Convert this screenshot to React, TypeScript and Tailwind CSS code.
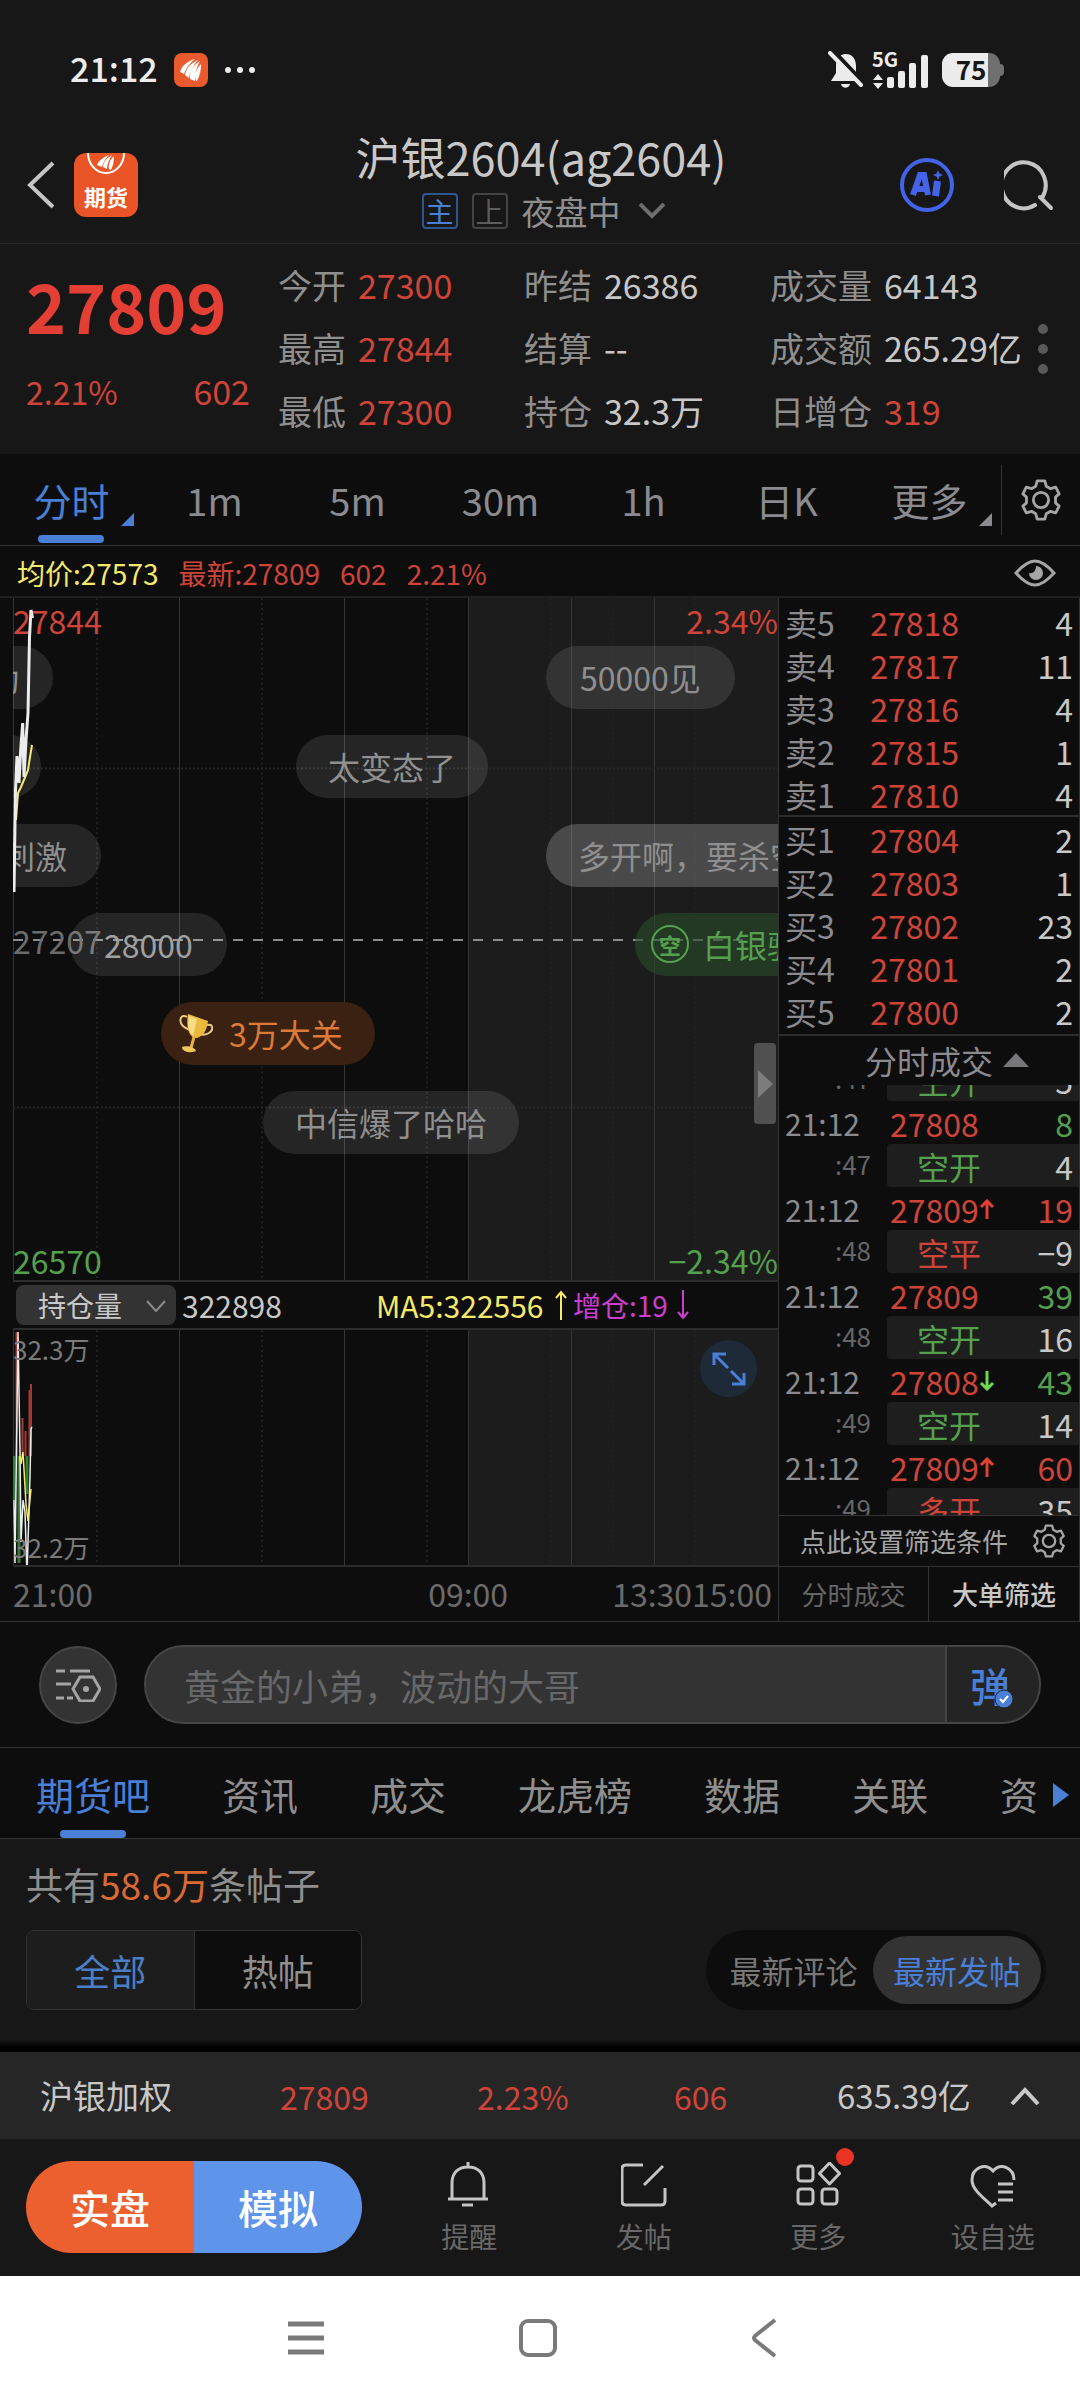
import React, { useState } from "react";

type Level = { label: string; price: string; volume: string };

type Trade = {
  time?: string;
  price?: string;
  trend?: "up" | "down";
  volume?: string;
  volumeUp?: boolean;
  second: string;
  kind: string;
  kindUp?: boolean;
  change: string;
};

const stats = [
  [
    { label: "今开", value: "27300", up: true },
    { label: "最高", value: "27844", up: true },
    { label: "最低", value: "27300", up: true },
  ],
  [
    { label: "昨结", value: "26386", up: false },
    { label: "结算", value: "--", up: false },
    { label: "持仓", value: "32.3万", up: false },
  ],
  [
    { label: "成交量", value: "64143", up: false },
    { label: "成交额", value: "265.29亿", up: false },
    { label: "日增仓", value: "319", up: true },
  ],
];

const periods = ["分时", "1m", "5m", "30m", "1h", "日K", "更多"];

const asks: Level[] = [
  { label: "卖5", price: "27818", volume: "4" },
  { label: "卖4", price: "27817", volume: "11" },
  { label: "卖3", price: "27816", volume: "4" },
  { label: "卖2", price: "27815", volume: "1" },
  { label: "卖1", price: "27810", volume: "4" },
];

const bids: Level[] = [
  { label: "买1", price: "27804", volume: "2" },
  { label: "买2", price: "27803", volume: "1" },
  { label: "买3", price: "27802", volume: "23" },
  { label: "买4", price: "27801", volume: "2" },
  { label: "买5", price: "27800", volume: "2" },
];

const trades: Trade[] = [
  { second: ":47", kind: "空开", change: "5" },
  { time: "21:12", price: "27808", volume: "8", second: ":47", kind: "空开", change: "4" },
  { time: "21:12", price: "27809", trend: "up", volume: "19", volumeUp: true, second: ":48", kind: "空平", kindUp: true, change: "−9" },
  { time: "21:12", price: "27809", volume: "39", second: ":48", kind: "空开", change: "16" },
  { time: "21:12", price: "27808", trend: "down", volume: "43", second: ":49", kind: "空开", change: "14" },
  { time: "21:12", price: "27809", trend: "up", volume: "60", volumeUp: true, second: ":49", kind: "多开", kindUp: true, change: "35" },
];

const forumTabs = ["期货吧", "资讯", "成交", "龙虎榜", "数据", "关联", "资"];

function GearIcon({ className }: { className?: string }) {
  return (
    <svg viewBox="0 0 40 44" className={className} fill="none" stroke="currentColor" strokeWidth="3" strokeLinejoin="round">
      <path d="M16 2h8l1.500 5.500 4.500 2.600 5.400-1.500 3.600 7-3.800 3.400v6l3.800 3.400-3.600 7-5.400-1.500-4.500 2.600L24 42h-8l-1.500-5.500-4.500-2.600-5.400 1.500-3.600-7L4.800 25v-6L1 15.600l3.600-7 5.400 1.500 4.500-2.600z" />
      <circle cx="20" cy="22" r="8" />
    </svg>
  );
}

function StatusBar() {
  return (
    <div className="flex h-[112px] items-center justify-between bg-[#171717] pt-7 pr-[76px] pl-[70px]">
      <div className="flex items-center gap-4">
        <span className="pb-1 text-[34px] leading-none font-medium text-[#ececec]">21:12</span>
        <svg viewBox="0 0 34 34" className="h-[34px] w-[34px]">
          <rect width="34" height="34" rx="8" fill="#ea5a2c" />
          <path d="M6 19c2-7 8-11 15-13-5 4-9 9-11 15zM11 22c1-7 6-12 13-15-5 6-8 11-9 18zM16 26c-1-7 3-14 10-18-3 6-5 11-5 20zM22 28c-2-6 0-12 5-17 0 6-1 12-4 17z" fill="#fff" />
        </svg>
        <svg viewBox="0 0 32 8" className="h-2 w-8" fill="#ececec">
          <circle cx="4" cy="4" r="3" />
          <circle cx="16" cy="4" r="3" />
          <circle cx="28" cy="4" r="3" />
        </svg>
      </div>
      <div className="flex items-center gap-2 text-[#ececec]">
        <svg viewBox="0 0 36 38" className="h-[38px] w-9">
          <path d="M18 3c7 0 10 6 10 12v7l5 8H3l5-8v-7C8 9 11 3 18 3zM13 33h9c-1 5-8 5-9 0z" fill="currentColor" />
          <path d="M6 1l30 32" stroke="#171717" strokeWidth="5" />
          <path d="M2 2l31 32" stroke="currentColor" strokeWidth="4" strokeLinecap="round" />
        </svg>
        <div className="relative h-[38px] w-[58px]">
          <span className="absolute -top-[2px] left-0 text-[20px] leading-none font-bold">5G</span>
          <svg viewBox="0 0 58 38" className="h-full w-full" fill="currentColor">
            <path d="M1 29l5-6 5 6zM1 32l5 6 5-6z" />
            <rect x="15" y="26" width="7" height="11" rx="2" />
            <rect x="26" y="20" width="7" height="17" rx="2" />
            <rect x="37" y="12" width="7" height="25" rx="2" />
            <rect x="49" y="4" width="7" height="33" rx="2" />
          </svg>
        </div>
        <div className="ml-1 flex items-center">
          <div className="flex h-[34px] w-[58px] items-center justify-center rounded-[11px] bg-linear-to-r from-[#ececec] from-80% to-[#6f6f6f] to-80% pb-[2px] text-[26px] leading-none font-bold text-[#171717]">
            75
          </div>
          <div className="h-3 w-1 rounded-r bg-[#6f6f6f]" />
        </div>
      </div>
    </div>
  );
}

function Header() {
  return (
    <header className="flex h-[132px] items-center justify-between border-b border-[#2a2a2a] bg-[#171717] px-[26px]">
      <div className="flex w-[160px] items-center gap-[18px] pt-[14px]">
        <button aria-label="返回">
          <svg viewBox="0 0 30 48" className="h-12 w-[30px]" fill="none" stroke="#c4c4c4" strokeWidth="4">
            <path d="M27 2L4 24l23 22" />
          </svg>
        </button>
        <button className="flex h-16 w-16 flex-col items-center justify-between overflow-hidden rounded-xl bg-[#ea5527] pb-[10px]">
          <svg viewBox="0 0 40 24" className="h-6 w-10">
            <path d="M2 0a18 20 0 0 0 36 0" fill="none" stroke="#fff" strokeWidth="2" />
            <path d="M11 12c2-5 7-8 12-10-4 4-6 8-7 12zM17 14c0-5 4-9 9-12-3 5-5 9-5 14zM23 16c-1-5 1-9 5-13 0 5-1 10-3 14z" fill="#fff" />
          </svg>
          <span className="text-[22px] leading-none font-bold text-white">期货</span>
        </button>
      </div>
      <div className="flex flex-col items-center gap-[10px] pt-1 pl-[2px]">
        <h1 className="text-[45px] leading-[52px] text-[#c8c8c8]">沪银2604(ag2604)</h1>
        <div className="flex items-center gap-[14px] pl-1">
          <span className="flex h-9 w-9 items-center justify-center rounded border-2 border-[#2c5591] text-[28px] leading-none text-[#4a7fd6]">主</span>
          <span className="flex h-9 w-9 items-center justify-center rounded border-2 border-[#444] text-[28px] leading-none text-[#5c5c5c]">上</span>
          <button className="flex items-center gap-[18px] text-[33px] leading-9 text-[#8f8f8f]">
            夜盘中
            <svg viewBox="0 0 26 16" className="h-4 w-[26px]" fill="none" stroke="#6e6e6e" strokeWidth="4">
              <path d="M1 1l12 12L25 1" />
            </svg>
          </button>
        </div>
      </div>
      <div className="flex w-[160px] items-center justify-end gap-[50px] pt-[14px]">
        <button aria-label="Ai">
          <svg viewBox="0 0 54 54" className="h-[54px] w-[54px]" fill="none" stroke="#4363e8">
            <circle cx="27" cy="27" r="25" strokeWidth="4" />
            <path d="M13 37l7-20h4l4 20M16 31h11" strokeWidth="6" />
            <path d="M37.500 23l-2 15" strokeWidth="7" />
            <path d="M38 12l1.500 3.500 3.500 1.500-3.500 1.500-1.500 3.500-1.500-3.500-3.500-1.500 3.500-1.500z" fill="#4363e8" stroke="none" />
          </svg>
        </button>
        <button aria-label="搜索">
          <svg viewBox="0 0 50 52" className="h-[52px] w-[50px]" fill="none" stroke="#c4c4c4" strokeWidth="4" strokeLinecap="round">
            <path d="M31 46A22 23 0 1 1 38 39" />
            <path d="M36 38l11 11" />
          </svg>
        </button>
      </div>
    </header>
  );
}

function Quote() {
  return (
    <section className="flex h-[210px] bg-[#171717] pt-[9px] pl-[26px]">
      <div className="flex w-[252px] flex-col text-[#cf4439]">
        <div className="text-[68px] leading-[104px] font-bold text-[#e33f34]">27809</div>
        <div className="flex items-center justify-between pr-7 leading-[68px]">
          <span className="text-[32px]">2.21%</span>
          <span className="text-[34px]">602</span>
        </div>
      </div>
      <div className="flex flex-1 text-[34px] leading-[63px]">
        {stats.map((col, i) => (
          <dl key={i} className="w-[246px] whitespace-nowrap">
            {col.map((s) => (
              <div key={s.label} className="flex gap-3">
                <dt className="text-[#8f8f8f]">{s.label}</dt>
                <dd className={s.up ? "text-[#cf4439]" : "text-[#c8c8c8]"}>{s.value}</dd>
              </div>
            ))}
          </dl>
        ))}
      </div>
      <button aria-label="更多行情" className="flex w-[42px] flex-col gap-[10px] pt-[71px]">
        <span className="h-[10px] w-[10px] rounded-full bg-[#595959]" />
        <span className="h-[10px] w-[10px] rounded-full bg-[#595959]" />
        <span className="h-[10px] w-[10px] rounded-full bg-[#595959]" />
      </button>
    </section>
  );
}

function PeriodTabs() {
  const [active, setActive] = useState("分时");
  return (
    <nav className="flex h-[92px] items-center border-b border-[#333]">
      <div className="grid h-full flex-1 grid-cols-7">
        {periods.map((p) => (
          <button
            key={p}
            onClick={() => setActive(p)}
            className={`relative flex items-center justify-center text-[38px] leading-none ${p === active ? "text-[#4a7fd6]" : "text-[#8a8a8f]"}`}
          >
            {p}
            {(p === "分时" || p === "更多") && (
              <svg viewBox="0 0 13 13" className="absolute right-[9px] bottom-[19px] h-[13px] w-[13px]">
                <path d="M13 0v13H0z" fill="currentColor" />
              </svg>
            )}
            {p === active && <span className="absolute bottom-[2px] left-[38px] h-2 w-[66px] rounded bg-[#4a7fd6]" />}
          </button>
        ))}
      </div>
      <button aria-label="设置" className="flex h-[70px] w-[79px] items-center justify-center border-l border-[#333] text-[#a5a5a5]">
        <GearIcon className="h-[42px] w-10" />
      </button>
    </nav>
  );
}

function PriceLine() {
  return (
    <div className="flex h-[52px] items-center justify-between border-b-2 border-[#202020] pr-6 pl-[17px] pt-1">
      <div className="flex gap-5 text-[28px] leading-none text-[#cf4439]">
        <span className="text-[#f5ea6b]">均价:27573</span>
        <span>最新:27809</span>
        <span>602</span>
        <span>2.21%</span>
      </div>
      <button aria-label="显示">
        <svg viewBox="0 0 42 28" className="h-7 w-[42px]" fill="none" stroke="#a5a5a5" strokeWidth="3">
          <path d="M2 14C10 5 15 2 21 2s11 3 19 12c-8 9-13 12-19 12S10 23 2 14z" />
          <path d="M22 7a7 7 0 1 1-7 7c4 1 7-2 7-7z" fill="#a5a5a5" stroke="none" />
        </svg>
      </button>
    </div>
  );
}

const solidLines = [0.5, 166.5, 331.5, 455.5, 558.5, 641.5];
const dottedLines = [84, 249, 414, 538, 600, 682];

function Grid({ height }: { height: number }) {
  return (
    <>
      <rect x="456" y="0" width="310" height={height} fill="#1c1c1c" />
      {solidLines.map((x) => (
        <path key={x} d={`M${x} 0V${height}`} stroke="#353535" />
      ))}
      {dottedLines.map((x) => (
        <path key={x} d={`M${x} 0V${height}`} stroke="#202020" strokeWidth="2" strokeDasharray="2 3" />
      ))}
    </>
  );
}

function MinuteChart() {
  const pill = "absolute flex h-[63px] items-center rounded-full pb-[2px] text-[32px] leading-none whitespace-nowrap";
  return (
    <div className="relative h-[684px] overflow-hidden border-b-2 border-[#2c2c2c]">
      <svg viewBox="0 0 765 684" preserveAspectRatio="none" className="h-full w-full" fill="none">
        <Grid height={684} />
        <path d="M0 171H765M0 511H765" stroke="#262626" strokeWidth="2" strokeDasharray="2 2" />
        <path d="M0 343H765" stroke="#8c8c8c" strokeWidth="2" strokeDasharray="10 10" />
      </svg>
      <span className="absolute top-[6px] left-0 text-[32px] leading-8 text-[#cf4439]">27844</span>
      <span className="absolute top-[6px] right-0 text-[32px] leading-8 text-[#cf4439]">2.34%</span>
      <span className="absolute top-[326px] left-0 text-[32px] leading-8 text-[#6b6b6b]">27207</span>
      <span className="absolute bottom-[4px] left-0 text-[32px] leading-8 text-[#55a04f]">26570</span>
      <span className="absolute right-0 bottom-[4px] text-[32px] leading-8 text-[#55a04f]">−2.34%</span>

      {/* scrolling comments */}
      <div className={`${pill} top-[48px] right-[725px] bg-white/10 px-[34px] text-[#8f8f8f]`}>动</div>
      <div className={`${pill} top-[48px] left-[533px] bg-white/10 px-[34px] text-[#8f8f8f]`}>50000见</div>
      <div className={`${pill} top-[137px] right-[737px] w-24 bg-white/10`} />
      <div className={`${pill} top-[137px] left-[283px] bg-white/10 px-8 text-[#8f8f8f]`}>太变态了</div>
      <div className={`${pill} top-[226px] right-[677px] bg-white/10 px-[34px] text-[#8f8f8f]`}>刺激</div>
      <div className={`${pill} top-[226px] left-[533px] bg-white/20 px-8 text-[#8f8f8f]`}>多开啊，要杀空头</div>
      <div className={`${pill} top-[315px] left-[57px] bg-white/10 px-[34px] text-[#a0a0a0]`}>28000</div>
      <div className={`${pill} top-[315px] left-[622px] gap-[14px] bg-[#2a4d2a]/60 px-4 text-[#55a04f]`}>
        <span className="flex h-[38px] w-[38px] items-center justify-center rounded-full border-2 border-[#55a04f] text-[22px] font-bold">空</span>
        白银骑士
      </div>
      <div className={`${pill} top-[404px] left-[148px] gap-4 bg-[#3a2111] pr-8 pl-[18px] text-[#dd7a38]`}>
        <svg viewBox="0 0 34 40" className="h-10 w-[34px]">
          <path d="M8 4C2 0-1 8 4 13c2 2 4 3 7 4M28 12c6-2 7 5 2 8-3 2-6 2-9 1" fill="none" stroke="#e8c988" strokeWidth="2" />
          <path d="M9 1l20 7c-1 9-5 17-13 17C9 23 7 12 9 1z" fill="#eab93e" />
          <path d="M10 3l8 3-4 17C9 19 8 11 10 3z" fill="#f8dd86" />
          <path d="M15 24l-3 11" stroke="#e6b13c" strokeWidth="3" />
          <path d="M3 34c4-2 13 0 14 4-3 2-14 2-14-4z" fill="#f0c75a" />
        </svg>
        3万大关
      </div>
      <div className={`${pill} top-[493px] left-[250px] bg-white/10 px-8 text-[#8f8f8f]`}>中信爆了哈哈</div>

      <svg viewBox="0 0 24 326" className="absolute top-0 left-0 h-[326px] w-6" fill="none">
        <path d="M3 222L5 195 8 189 13 177 15 172 17 159 19 147" stroke="#f5ea6b" strokeWidth="2" />
        <path d="M1 294L2.500 192 4 158 6 185 7.700 152 9.700 125 11 179 13 142 15 115 16.500 39 18 12 19.500 20" stroke="#ececec" strokeWidth="3" />
      </svg>
      <button aria-label="收起盘口" className="absolute top-[445px] right-[2px] flex h-[81px] w-[22px] items-center justify-center rounded-sm bg-[#505050]">
        <svg viewBox="0 0 15 28" className="h-7 w-[15px]">
          <path d="M0 0l15 14L0 28z" fill="#7c7c7c" />
        </svg>
      </button>
    </div>
  );
}

function PositionChart() {
  return (
    <>
      <div className="flex h-[46px] items-center text-[30px] leading-none">
        <div className="relative ml-[3px] h-10 w-40">
          <select aria-label="指标" className="h-full w-full appearance-none rounded-lg bg-[#333] pl-[22px] text-[28px] leading-none text-[#c8c8c8]">
            <option>持仓量</option>
            <option>成交量</option>
          </select>
          <svg viewBox="0 0 20 12" className="pointer-events-none absolute top-[15px] right-[10px] h-3 w-5" fill="none" stroke="#8a8a8a" strokeWidth="2">
            <path d="M1 1l9 10 9-10" />
          </svg>
        </div>
        <span className="w-[200px] pl-[6px] text-[#c8c8c8]">322898</span>
        <span className="flex w-[191px] items-center justify-between text-[#f5ea6b]">
          MA5:322556
          <svg viewBox="0 0 12 30" className="h-[30px] w-3" fill="none" stroke="currentColor" strokeWidth="2">
            <path d="M6 30V2M1 8l5-6 5 6" />
          </svg>
        </span>
        <span className="ml-[6px] flex w-[116px] items-center justify-between text-[28px] text-[#cb3fd0]">
          增仓:19
          <svg viewBox="0 0 12 30" className="h-[30px] w-3" fill="none" stroke="currentColor" strokeWidth="2">
            <path d="M6 0v28M1 22l5 6 5-6" />
          </svg>
        </span>
      </div>
      <div className="relative h-[239px] border-y-2 border-[#2c2c2c]">
        <svg viewBox="0 0 765 235" preserveAspectRatio="none" className="h-full w-full" fill="none">
          <Grid height={235} />
        </svg>
        <svg viewBox="0 0 22 235" className="absolute top-0 left-0 h-[235px] w-[22px]" fill="none">
          <path d="M3.500 2v124M9.500 88v38M12.500 101v25M16.500 60v66M18 54v72" stroke="#a33a33" strokeWidth="2" />
          <path d="M1 126v44M6 126v107M14 126v38" stroke="#357a35" strokeWidth="3" />
          <path d="M1 170l1 63 3-231 2 120 1 90 2-42 2 12 2 63 3-98 1-48 1-2" stroke="#ececec" strokeWidth="1.500" />
          <path d="M7 126l1 8 2-12 3 52 2 17 3-32" stroke="#f5ea6b" strokeWidth="1.500" />
        </svg>
        <span className="absolute top-[3px] left-0 text-[26px] leading-8 text-[#7a7a7a]">32.3万</span>
        <span className="absolute bottom-[2px] left-0 text-[26px] leading-8 text-[#7a7a7a]">32.2万</span>
        <button aria-label="全屏" className="absolute top-[10px] right-[21px] flex h-[57px] w-[57px] items-center justify-center rounded-full bg-[#1f2a38]">
          <svg viewBox="0 0 34 34" className="h-[34px] w-[34px]" fill="none" stroke="#4a7fd6" strokeWidth="3">
            <path d="M2 13V2h12M2 2l14 14M32 21v11H20M32 32L19 19" />
          </svg>
        </button>
      </div>
      <div className="flex h-[54px] items-center pb-[2px] text-[32px] leading-none text-[#6b6b6b]">
        <span className="flex-1">21:00</span>
        <span className="w-[184px]">09:00</span>
        <span className="pr-[6px]">13:3015:00</span>
      </div>
    </>
  );
}

function OrderTable({ levels }: { levels: Level[] }) {
  return (
    <table className="w-full table-fixed text-[32px] leading-none">
      <tbody>
        {levels.map((l) => (
          <tr key={l.label} className="h-[43px]">
            <th scope="row" className="w-[76px] pl-[6px] text-left font-normal text-[#8a8a8f]">{l.label}</th>
            <td className="w-[104px] text-right text-[#cf4439]">{l.price}</td>
            <td className="pr-[6px] text-right text-[#c8c8c8]">{l.volume}</td>
          </tr>
        ))}
      </tbody>
    </table>
  );
}

function TradeTable() {
  return (
    <table className="-mt-[27px] w-full table-fixed text-[32px] leading-none">
      <tbody>
        {trades.map((t, i) => (
          <React.Fragment key={i}>
            {t.time && (
              <tr className="h-[43px]">
                <td className="w-[108px] pl-[6px] text-[30px] text-[#8a8a8f]">{t.time}</td>
                <td className="w-[116px] pl-[3px] text-[#cf4439]">
                  <span className="flex items-center">
                    {t.price}
                    {t.trend && (
                      <svg viewBox="0 0 16 20" className={`h-5 w-4 shrink-0 ${t.trend === "up" ? "text-[#e33f34]" : "rotate-180 text-[#6cd94f]"}`} fill="none" stroke="currentColor" strokeWidth="3">
                        <path d="M8 20V2M2 8l6-6 6 6" />
                      </svg>
                    )}
                  </span>
                </td>
                <td className={`pr-[6px] text-right ${t.volumeUp ? "text-[#cf4439]" : "text-[#55a04f]"}`}>{t.volume}</td>
              </tr>
            )}
            <tr className="h-[43px]">
              <td className="w-[108px] pr-4 pb-1 text-right text-[26px] text-[#666]">{t.second}</td>
              <td className={`w-[116px] rounded-l bg-[#1e1e1e] pl-[30px] ${t.kindUp ? "text-[#cf4439]" : "text-[#55a04f]"}`}>{t.kind}</td>
              <td className="bg-[#1e1e1e] pr-[6px] text-right text-[#c8c8c8]">{t.change}</td>
            </tr>
          </React.Fragment>
        ))}
      </tbody>
    </table>
  );
}

function SidePanel() {
  return (
    <aside className="flex w-[302px] flex-col border-x border-[#333]">
      <div className="h-[219px] border-b-2 border-[#2c2c2c] pt-[2px]">
        <OrderTable levels={asks} />
      </div>
      <div className="h-[219px] border-b-2 border-[#2c2c2c]">
        <OrderTable levels={bids} />
      </div>
      <button className="flex h-[49px] items-center justify-center gap-[10px] pb-[2px] pl-9 text-[32px] leading-none text-[#8a8a8f]">
        分时成交
        <svg viewBox="0 0 26 14" className="h-[14px] w-[26px]">
          <path d="M13 0l13 14H0z" fill="#77777a" />
        </svg>
      </button>
      <div className="h-[430px] overflow-hidden">
        <TradeTable />
      </div>
      <button className="flex h-[51px] items-center justify-between border-t border-[#333] pr-[14px] pl-[21px] text-[26px] leading-none text-[#a5a5a5]">
        点此设置筛选条件
        <GearIcon className="h-[34px] w-8" />
      </button>
      <div className="grid flex-1 grid-cols-2 border-t border-[#333] text-[26px] leading-none">
        <button className="border-r border-[#333] text-[#666]">分时成交</button>
        <button className="font-medium text-[#c8c8c8]">大单筛选</button>
      </div>
    </aside>
  );
}

function CommentBar() {
  return (
    <div className="flex h-[127px] items-center gap-[27px] border-y border-[#333] px-[39px]">
      <button aria-label="弹幕设置" className="flex h-[78px] w-[78px] items-center justify-center rounded-full border-2 border-[#454545] bg-[#333]">
        <svg viewBox="0 0 46 34" className="h-[34px] w-[46px]" fill="none" stroke="#a5a5a5" strokeWidth="3">
          <path d="M1 3h9M15 3h20M1 16h15M1 30h8M12 30h6" />
          <path d="M25 9h13l7 12-7 12H25l-7-12z" />
          <circle cx="31" cy="21" r="3" fill="#a5a5a5" stroke="none" />
        </svg>
      </button>
      <div className="flex h-[79px] flex-1 overflow-hidden rounded-full border-2 border-[#454545] bg-[#333]">
        <input aria-label="发弹幕" placeholder="黄金的小弟，波动的大哥" className="min-w-0 flex-1 bg-transparent pl-[38px] text-[36px] text-[#c8c8c8] placeholder-[#686868] outline-none" />
        <button className="flex w-[94px] items-center border-l-2 border-[#454545] bg-[#242424] pl-[23px] text-[40px] leading-none font-medium text-[#4a7fd6]">
          <span className="relative">
            弹
            <svg viewBox="0 0 20 20" className="absolute -right-1 -bottom-1 h-5 w-5">
              <circle cx="10" cy="10" r="9" fill="#4a7fd6" stroke="#242424" />
              <path d="M6 10l3 3 5-6" fill="none" stroke="#fff" strokeWidth="2" />
            </svg>
          </span>
        </button>
      </div>
    </div>
  );
}

function Forum() {
  return (
    <>
      <nav className="flex h-[91px] items-center border-b border-[#333] pl-9">
        <div className="flex h-full min-w-0 flex-1 gap-[72px]">
          {forumTabs.map((t, i) => (
            <button key={t + i} className={`relative flex shrink-0 items-center pt-[2px] text-[38px] leading-none whitespace-nowrap ${i === 0 ? "text-[#4a7fd6]" : "text-[#8f8f8f]"}`}>
              {t}
              {i === 0 && <span className="absolute bottom-0 left-6 h-2 w-[66px] rounded bg-[#4a7fd6]" />}
            </button>
          ))}
        </div>
        <svg viewBox="0 0 16 24" className="mt-1 mr-[11px] h-6 w-4">
          <path d="M0 0l16 12L0 24z" fill="#4a7fd6" />
        </svg>
      </nav>
      <section className="h-[213px] bg-[#171717] pt-[25px] text-[36px]">
        <p className="pl-[26px] text-[37px] leading-[40px] text-[#8f8f8f]">
          共有<span className="text-[#d96a33]">58.6万</span>条帖子
        </p>
        <div className="mt-[26px] flex items-center justify-between pr-[34px] pl-[26px]">
          <div className="flex h-20 w-[336px] overflow-hidden rounded-lg border border-[#333] leading-none">
            <button className="flex-1 bg-[#1d1d1d] text-[#4a7fc8]">全部</button>
            <button className="flex-1 border-l border-[#333] bg-[#0d0d0d] text-[#8f8f8f]">热帖</button>
          </div>
          <div className="flex h-20 w-[340px] items-center rounded-full bg-[#0d0d0d] pr-[5px] text-[32px] leading-none">
            <button className="flex-1 pl-2 text-[#777]">最新评论</button>
            <button className="h-[68px] w-[168px] rounded-full bg-[#333] text-[#4a7fd6]">最新发帖</button>
          </div>
        </div>
        <div className="mt-[30px] h-3 bg-linear-to-b from-[#171717] to-black" />
      </section>
    </>
  );
}

function IndexBar() {
  return (
    <div className="flex h-[87px] items-center bg-[#262626] pr-10 pl-10 text-[32px] leading-none text-[#cf4439]">
      <span className="w-[240px] text-[33px] text-[#c8c8c8]">沪银加权</span>
      <span className="w-[197px]">27809</span>
      <span className="w-[197px]">2.23%</span>
      <span className="w-[163px]">606</span>
      <span className="flex-1 text-[33px] text-[#c8c8c8]">635.39亿</span>
      <button aria-label="展开">
        <svg viewBox="0 0 30 18" className="h-[18px] w-[30px]" fill="none" stroke="#c8c8c8" strokeWidth="4">
          <path d="M2 17L15 3l13 14" />
        </svg>
      </button>
    </div>
  );
}

const actions = [
  {
    label: "提醒",
    icon: <path d="M6 37V21C6 10 13 5 22 5s16 5 16 16v16M2 37h40M22 0v5M16 43h11" />,
  },
  {
    label: "发帖",
    icon: <path d="M22 3H5Q1 3 1 7v32q0 4 4 4h35q4 0 4-4V26M42 4L23 23" />,
  },
  {
    label: "更多",
    icon: (
      <>
        <rect x="3" y="4" width="15" height="15" rx="3" />
        <rect x="3" y="27" width="15" height="15" rx="3" />
        <rect x="27" y="27" width="15" height="15" rx="3" />
        <path d="M34.500 1l10 10.500-10 10.500-10-10.500z" strokeLinejoin="round" />
      </>
    ),
  },
  {
    label: "设自选",
    icon: <path d="M44 18C44 6 31 0 23 9 15 0 2 6 2 18c0 10 12 18 20 26l4-3M28 22h15M28 30h15M28 38h15" />,
  },
];

function BottomNav() {
  return (
    <footer>
      <div className="flex h-[137px] bg-[#171717] pl-[26px]">
        <div className="mt-[22px] flex h-[92px] w-[336px] overflow-hidden rounded-full text-[40px] leading-none font-medium text-white">
          <button className="flex-1 bg-[#ec602f]">实盘</button>
          <button className="flex-1 bg-[#5e94ea]">模拟</button>
        </div>
        <div className="ml-5 grid flex-1 grid-cols-4">
          {actions.map((a) => (
            <button key={a.label} className="flex flex-col items-center gap-[14px] pt-[23px] text-[28px] leading-none text-[#686868]">
              <span className="relative">
                <svg viewBox="0 0 46 46" className="h-[46px] w-[46px]" fill="none" stroke="#c4c4c4" strokeWidth="3">
                  {a.icon}
                </svg>
                {a.label === "更多" && <span className="absolute -top-[14px] -right-[13px] h-[18px] w-[18px] rounded-full bg-[#e93323]" />}
              </span>
              {a.label}
            </button>
          ))}
        </div>
      </div>
      <div className="flex h-[124px] items-center bg-white pr-4">
        <div className="mx-auto flex w-[490px] items-center justify-between">
          <button aria-label="最近任务">
            <svg viewBox="0 0 38 34" className="h-[34px] w-[38px]" stroke="#7a7a7a" strokeWidth="5">
              <path d="M1 3h36M1 17h36M1 31h36" />
            </svg>
          </button>
          <button aria-label="主页">
            <svg viewBox="0 0 40 40" className="h-10 w-10" fill="none" stroke="#7a7a7a" strokeWidth="4">
              <rect x="3" y="3" width="34" height="34" rx="7" />
            </svg>
          </button>
          <button aria-label="后退">
            <svg viewBox="0 0 26 40" className="h-10 w-[26px]" fill="none" stroke="#7a7a7a" strokeWidth="4">
              <path d="M24 2L4 18q-2 2 0 4l20 16" />
            </svg>
          </button>
        </div>
      </div>
    </footer>
  );
}

export default function App() {
  return (
    <div className="flex w-full flex-col overflow-hidden bg-[#0d0d0d] font-['Noto_Sans_CJK_SC',sans-serif]">
      <StatusBar />
      <Header />
      <Quote />
      <PeriodTabs />
      <PriceLine />
      <main className="flex">
        <div className="min-w-0 flex-1 pl-[13px]">
          <MinuteChart />
          <PositionChart />
        </div>
        <SidePanel />
      </main>
      <CommentBar />
      <Forum />
      <IndexBar />
      <BottomNav />
    </div>
  );
}
